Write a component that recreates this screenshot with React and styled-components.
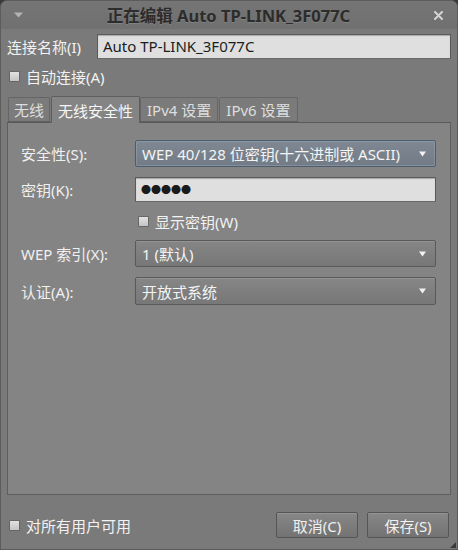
import React from "react";
import styled, { createGlobalStyle } from "styled-components";

const Global = createGlobalStyle`
  html, body { margin: 0; padding: 0; background: #3a3a3a; }
  body { font-family: "Noto Sans", "Noto Sans CJK SC", sans-serif; }
  * { box-sizing: border-box; }
`;

const Window = styled.div`
  position: relative;
  width: 458px;
  height: 550px;
  background: #7a7a7a;
  border: 1px solid #5c5c5c;
  border-radius: 7px 7px 0 0;
  display: flex;
  flex-direction: column;
  overflow: hidden;
  color: #f2f2f2;
  font-size: 15px;
`;

const TitleBar = styled.div`
  height: 28px;
  flex: none;
  display: flex;
  align-items: center;
  padding: 0 14px 0 13px;
  background: linear-gradient(#757575, #707070);
`;

const TitleText = styled.div`
  flex: 1;
  text-align: center;
  font-weight: bold;
  font-size: 16.5px;
  color: #2c2c2c;
  text-shadow: 0 1px 0 rgba(255, 255, 255, 0.12);
`;

const Body = styled.div`
  flex: 1;
  display: flex;
  flex-direction: column;
  padding: 4px 6px 0 6px;
`;

const NameRow = styled.div`
  display: flex;
  align-items: center;
  height: 26px;
`;

const NameLabel = styled.span`
  width: 90px;
  flex: none;
`;

const Entry = styled.div`
  flex: 1;
  height: ${(p) => p.$h || 25}px;
  background: #dfdfdf;
  border: 1px solid #5a5a5a;
  border-bottom-color: #6a6a6a;
  box-shadow: inset 0 1px 1px rgba(0, 0, 0, 0.25);
  color: #1c1c1c;
  display: flex;
  align-items: center;
  padding: 0 5px;
`;

const Dots = styled.span`
  font-size: 10px;
  letter-spacing: 0px;
  color: #1a1a1a;
`;

const CheckRow = styled.label`
  display: flex;
  align-items: center;
  gap: 6px;
  height: ${(p) => p.$h || 18}px;
  margin-left: ${(p) => p.$ml || 0}px;
  margin-top: ${(p) => p.$mt || 0}px;
`;

const Box = styled.span`
  width: 11px;
  height: 11px;
  flex: none;
  border: 1px solid #666;
  background: linear-gradient(#e2e2e2, #c4c4c4);
  border-radius: 1px;
`;

const Tabs = styled.div`
  display: flex;
  align-items: flex-end;
  height: 27px;
  margin-top: 9px;
  padding-left: 1px;
  position: relative;
  z-index: 1;
`;

const Tab = styled.div`
  height: ${(p) => (p.$active ? 27 : 25)}px;
  padding: 0 ${(p) => p.$pad || 6}px;
  margin-right: ${(p) => (p.$active ? 0 : 1)}px;
  display: flex;
  align-items: center;
  border: 1px solid ${(p) => (p.$active ? "#5e5e5e" : "#656565")};
  border-bottom: ${(p) => (p.$active ? "none" : "1px solid #5e5e5e")};
  background: ${(p) => (p.$active ? "#848484" : "#7b7b7b")};
  color: ${(p) => (p.$active ? "#f6f6f6" : "#dedede")};
  border-radius: 2px 2px 0 0;
  margin-bottom: ${(p) => (p.$active ? -1 : 0)}px;
`;

const Panel = styled.div`
  height: 373px;
  flex: none;
  background: #848484;
  border: 1px solid #5e5e5e;
  border-top-color: #5a5a5a;
  padding: 17px 14px 0 13px;
`;

const Form = styled.div`
  display: grid;
  grid-template-columns: 114px 1fr;
  grid-template-rows: 27px 25px 18px 27px 28px;
  row-gap: 10px;
  align-items: center;
`;

const Label = styled.span`
  color: #f0f0f0;
`;

const Combo = styled.div`
  height: ${(p) => p.$h || 27}px;
  display: flex;
  align-items: center;
  padding: 0 9px 0 6px;
  border: 1px solid ${(p) => (p.$focus ? "#4e5d6b" : "#595959")};
  border-radius: 2px;
  background: ${(p) =>
    p.$focus
      ? "linear-gradient(#7f8892, #737c86)"
      : "linear-gradient(#868686, #777777)"};
  box-shadow: ${(p) =>
    p.$focus
      ? "inset 0 0 0 1px rgba(160, 180, 200, 0.35)"
      : "inset 0 1px 0 rgba(255,255,255,0.12)"};
  color: #f4f4f4;
`;

const ComboText = styled.span`
  flex: 1;
  white-space: nowrap;
`;

const Arrow = styled.svg`
  width: 7px;
  height: 6px;
  flex: none;
`;

const Footer = styled.div`
  flex: 1;
  display: flex;
  align-items: center;
  padding: 6px 2px 0 2px;
`;

const Spacer = styled.div`
  flex: 1;
`;

const Button = styled.div`
  width: 82px;
  height: 26px;
  margin-left: ${(p) => p.$ml || 0}px;
  display: flex;
  align-items: center;
  justify-content: center;
  border: 1px solid #555;
  border-radius: 2px;
  background: linear-gradient(#878787, #737373);
  box-shadow: inset 0 1px 0 rgba(255,255,255,0.12);
  color: #f0f0f0;
`;

const Grip = styled.svg`
  position: absolute;
  right: 1px;
  bottom: 1px;
  width: 6px;
  height: 6px;
`;

const DownArrow = () => (
  <Arrow viewBox="0 0 7 6">
    <path d="M0 0.5 L7 0.5 L3.5 5.5 Z" fill="#f2f2f2" />
  </Arrow>
);

export default function App() {
  return (
    <>
      <Global />
      <Window>
        <TitleBar>
          <svg width="9" height="6" viewBox="0 0 9 6">
            <path d="M0 0.5 L9 0.5 L4.5 5.5 Z" fill="#b4b4b4" />
          </svg>
          <TitleText>正在编辑 Auto TP-LINK_3F077C</TitleText>
          <svg width="9" height="9" viewBox="0 0 9 9">
            <path d="M1 1 L8 8 M8 1 L1 8" stroke="#d4d4d4" strokeWidth="2" strokeLinecap="round" />
          </svg>
        </TitleBar>
        <Body>
          <NameRow>
            <NameLabel>连接名称(I)</NameLabel>
            <Entry>Auto TP-LINK_3F077C</Entry>
          </NameRow>
          <CheckRow $h={20} $mt={7} $ml={2}>
            <Box />
            <span>自动连接(A)</span>
          </CheckRow>
          <Tabs>
            <Tab $pad={5}>无线</Tab>
            <Tab $active $pad={6}>无线安全性</Tab>
            <Tab $pad={6}>IPv4 设置</Tab>
            <Tab $pad={6}>IPv6 设置</Tab>
          </Tabs>
          <Panel>
            <Form>
              <Label>安全性(S):</Label>
              <Combo $focus>
                <ComboText>WEP 40/128 位密钥(十六进制或 ASCII)</ComboText>
                <DownArrow />
              </Combo>
              <Label>密钥(K):</Label>
              <Entry>
                <Dots>●●●●●</Dots>
              </Entry>
              <span />
              <CheckRow $ml={3}>
                <Box />
                <span>显示密钥(W)</span>
              </CheckRow>
              <Label>WEP 索引(X):</Label>
              <Combo>
                <ComboText>1 (默认)</ComboText>
                <DownArrow />
              </Combo>
              <Label>认证(A):</Label>
              <Combo $h={28}>
                <ComboText>开放式系统</ComboText>
                <DownArrow />
              </Combo>
            </Form>
          </Panel>
          <Footer>
            <CheckRow>
              <Box />
              <span>对所有用户可用</span>
            </CheckRow>
            <Spacer />
            <Button>取消(C)</Button>
            <Button $ml={9}>保存(S)</Button>
          </Footer>
        </Body>
        <Grip viewBox="0 0 6 6">
          <path d="M6 0 L6 6 L0 6 Z" fill="#3a3a3a" />
        </Grip>
      </Window>
    </>
  );
}
